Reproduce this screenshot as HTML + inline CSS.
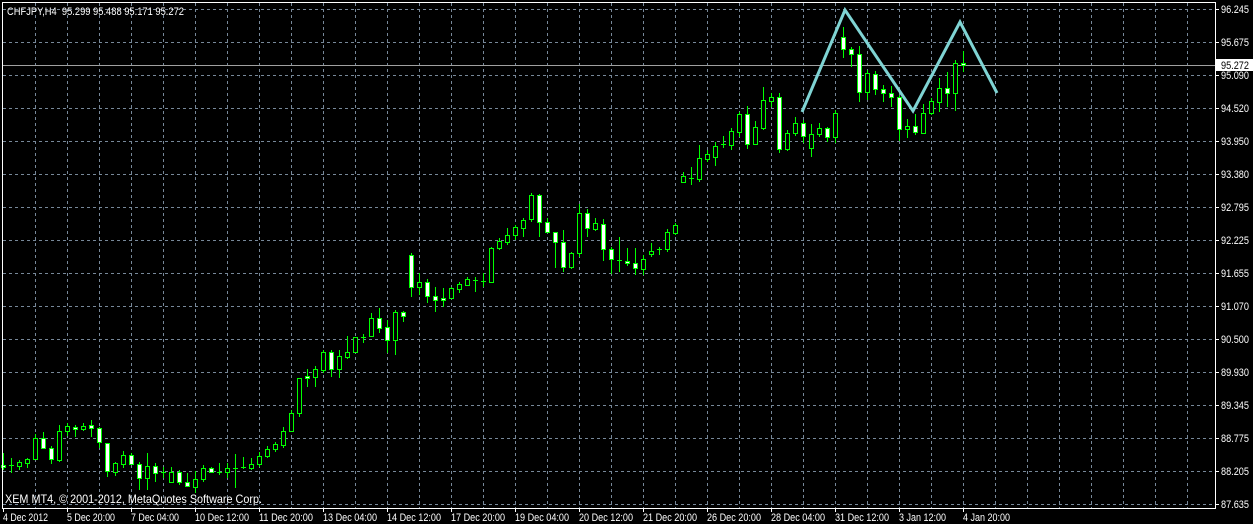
<!DOCTYPE html>
<html><head><meta charset="utf-8"><style>
html,body{margin:0;padding:0;background:#000;width:1253px;height:524px;overflow:hidden}
svg{display:block}
text{font-family:"Liberation Sans",sans-serif;font-size:11px;fill:#fff}
</style></head><body>
<svg width="1253" height="524" viewBox="0 0 1253 524" xmlns="http://www.w3.org/2000/svg">
<rect width="1253" height="524" fill="#000"/>
<g stroke="#778899" stroke-width="1" stroke-dasharray="3,3" shape-rendering="crispEdges">
<path d="M3 9.5H1215M3 42.5H1215M3 75.5H1215M3 108.5H1215M3 141.5H1215M3 174.5H1215M3 207.5H1215M3 240.5H1215M3 273.5H1215M3 306.5H1215M3 339.5H1215M3 372.5H1215M3 405.5H1215M3 438.5H1215M3 471.5H1215M3 504.5H1215"/>
<path d="M35.5 3V508M67.5 3V508M99.5 3V508M131.5 3V508M163.5 3V508M195.5 3V508M227.5 3V508M259.5 3V508M291.5 3V508M323.5 3V508M355.5 3V508M387.5 3V508M419.5 3V508M451.5 3V508M483.5 3V508M515.5 3V508M547.5 3V508M579.5 3V508M611.5 3V508M643.5 3V508M675.5 3V508M707.5 3V508M739.5 3V508M771.5 3V508M803.5 3V508M835.5 3V508M867.5 3V508M899.5 3V508M931.5 3V508M963.5 3V508M995.5 3V508M1027.5 3V508M1059.5 3V508M1091.5 3V508M1123.5 3V508M1155.5 3V508M1187.5 3V508"/>
</g>
<path d="M3 65.5H1215" stroke="#a0a0a0" stroke-width="1" shape-rendering="crispEdges"/>
<g stroke="#00ff00" stroke-width="1" shape-rendering="crispEdges" fill="none">
<path d="M3.5 453V470M11.5 458V473M19.5 460V470M27.5 458V468M35.5 434V460M43.5 432V449M51.5 446V464M59.5 425V462M67.5 423V436M75.5 425V437M83.5 423V431M91.5 420V437M99.5 427V448M107.5 443V477M115.5 462V476M123.5 451V468M131.5 453V465M139.5 462V490M147.5 453V490M155.5 463V482M163.5 467V478M171.5 467V483M179.5 470V485M187.5 473V487M195.5 471V493M203.5 465V482M211.5 467V473M219.5 463V475M227.5 463V478M235.5 454V488M243.5 457V469M251.5 458V470M259.5 452V467M267.5 446V458M275.5 442V452M283.5 427V448M291.5 410V432M299.5 378V417M307.5 369V387M315.5 366V387M323.5 350V373M331.5 350V377M339.5 350V378M347.5 336V359M355.5 337V353M363.5 334V343M371.5 313V337M379.5 308V333M387.5 320V353M395.5 310V355M403.5 311V322M411.5 253V297M419.5 273V295M427.5 279V303M435.5 287V312M443.5 288V307M451.5 287V299M459.5 282V293M467.5 277V286M475.5 277V292M483.5 273V287M491.5 247V282M499.5 238V250M507.5 228V245M515.5 225V240M523.5 218V237M531.5 193V222M539.5 194V237M547.5 218V233M555.5 232V268M563.5 230V272M571.5 252V269M579.5 204V257M587.5 209V237M595.5 218V231M603.5 219V261M611.5 247V274M619.5 237V272M627.5 248V266M635.5 248V275M643.5 255V275M651.5 243V257M659.5 247V255M667.5 229V252M675.5 223V235M683.5 172V183M691.5 167V185M699.5 145V182M707.5 150V162M715.5 142V166M723.5 136V148M731.5 128V150M739.5 112V137M747.5 106V149M755.5 121V145M763.5 87V130M771.5 93V107M779.5 93V153M787.5 130V151M795.5 117V136M803.5 120V143M811.5 124V157M819.5 123V137M827.5 127V142M835.5 110V143M843.5 27V58M851.5 47V67M859.5 46V102M867.5 70V100M875.5 71V95M883.5 85V102M891.5 86V107M899.5 95V141M907.5 119V138M915.5 114V135M923.5 104V133M931.5 98V115M939.5 78V112M947.5 72V107M955.5 60V111M963.5 51V72"/>
<path d="M9 465.5H14M161 472.5H166M217 472.5H222M233 468.5H238M241 467.5H246M361 337.5H366M473 280.5H478M481 281.5H486M617 260.5H622M657 249.5H662M689 178.5H694M721 144.5H726"/>
</g>
<g stroke="#00ff00" stroke-width="1" fill="#000" shape-rendering="crispEdges">
<rect x="17.5" y="462.5" width="4" height="4"/><rect x="25.5" y="459.5" width="4" height="4"/><rect x="33.5" y="438.5" width="4" height="21"/><rect x="57.5" y="431.5" width="4" height="29"/><rect x="65.5" y="426.5" width="4" height="5"/><rect x="81.5" y="426.5" width="4" height="3"/><rect x="113.5" y="463.5" width="4" height="9"/><rect x="121.5" y="455.5" width="4" height="9"/><rect x="145.5" y="466.5" width="4" height="12"/><rect x="169.5" y="472.5" width="4" height="10"/><rect x="193.5" y="479.5" width="4" height="8"/><rect x="201.5" y="468.5" width="4" height="11"/><rect x="225.5" y="468.5" width="4" height="4"/><rect x="249.5" y="464.5" width="4" height="4"/><rect x="257.5" y="456.5" width="4" height="8"/><rect x="265.5" y="449.5" width="4" height="7"/><rect x="273.5" y="444.5" width="4" height="5"/><rect x="281.5" y="431.5" width="4" height="14"/><rect x="289.5" y="413.5" width="4" height="18"/><rect x="297.5" y="378.5" width="4" height="35"/><rect x="313.5" y="369.5" width="4" height="8"/><rect x="321.5" y="352.5" width="4" height="18"/><rect x="337.5" y="356.5" width="4" height="13"/><rect x="345.5" y="352.5" width="4" height="5"/><rect x="353.5" y="337.5" width="4" height="15"/><rect x="369.5" y="318.5" width="4" height="18"/><rect x="393.5" y="312.5" width="4" height="28"/><rect x="417.5" y="282.5" width="4" height="5"/><rect x="449.5" y="288.5" width="4" height="10"/><rect x="457.5" y="284.5" width="4" height="5"/><rect x="465.5" y="279.5" width="4" height="6"/><rect x="489.5" y="248.5" width="4" height="34"/><rect x="497.5" y="241.5" width="4" height="7"/><rect x="505.5" y="235.5" width="4" height="7"/><rect x="513.5" y="227.5" width="4" height="8"/><rect x="521.5" y="220.5" width="4" height="8"/><rect x="529.5" y="195.5" width="4" height="24"/><rect x="569.5" y="253.5" width="4" height="14"/><rect x="577.5" y="213.5" width="4" height="40"/><rect x="593.5" y="223.5" width="4" height="6"/><rect x="641.5" y="259.5" width="4" height="10"/><rect x="649.5" y="251.5" width="4" height="3"/><rect x="665.5" y="232.5" width="4" height="17"/><rect x="673.5" y="225.5" width="4" height="8"/><rect x="681.5" y="176.5" width="4" height="6"/><rect x="697.5" y="158.5" width="4" height="21"/><rect x="705.5" y="154.5" width="4" height="5"/><rect x="713.5" y="146.5" width="4" height="11"/><rect x="729.5" y="131.5" width="4" height="14"/><rect x="737.5" y="114.5" width="4" height="18"/><rect x="753.5" y="127.5" width="4" height="17"/><rect x="761.5" y="100.5" width="4" height="28"/><rect x="769.5" y="97.5" width="4" height="4"/><rect x="785.5" y="133.5" width="4" height="16"/><rect x="793.5" y="123.5" width="4" height="10"/><rect x="809.5" y="134.5" width="4" height="14"/><rect x="817.5" y="128.5" width="4" height="6"/><rect x="833.5" y="113.5" width="4" height="24"/><rect x="865.5" y="73.5" width="4" height="19"/><rect x="905.5" y="126.5" width="4" height="3"/><rect x="921.5" y="113.5" width="4" height="20"/><rect x="929.5" y="101.5" width="4" height="12"/><rect x="937.5" y="88.5" width="4" height="14"/><rect x="953.5" y="63.5" width="4" height="30"/>
</g>
<g stroke="#00ff00" stroke-width="1" fill="#fff" shape-rendering="crispEdges">
<rect x="1.5" y="465.5" width="4" height="2"/><rect x="41.5" y="438.5" width="4" height="10"/><rect x="49.5" y="448.5" width="4" height="11"/><rect x="73.5" y="427.5" width="4" height="2"/><rect x="89.5" y="425.5" width="4" height="3"/><rect x="97.5" y="428.5" width="4" height="14"/><rect x="105.5" y="443.5" width="4" height="28"/><rect x="129.5" y="455.5" width="4" height="9"/><rect x="137.5" y="464.5" width="4" height="14"/><rect x="153.5" y="466.5" width="4" height="7"/><rect x="177.5" y="472.5" width="4" height="10"/><rect x="185.5" y="482.5" width="4" height="4"/><rect x="209.5" y="468.5" width="4" height="4"/><rect x="305.5" y="376.5" width="4" height="2"/><rect x="329.5" y="352.5" width="4" height="17"/><rect x="377.5" y="318.5" width="4" height="10"/><rect x="385.5" y="327.5" width="4" height="13"/><rect x="401.5" y="312.5" width="4" height="4"/><rect x="409.5" y="255.5" width="4" height="32"/><rect x="425.5" y="282.5" width="4" height="14"/><rect x="433.5" y="296.5" width="4" height="4"/><rect x="441.5" y="298.5" width="4" height="2"/><rect x="537.5" y="195.5" width="4" height="27"/><rect x="545.5" y="222.5" width="4" height="10"/><rect x="553.5" y="232.5" width="4" height="10"/><rect x="561.5" y="242.5" width="4" height="25"/><rect x="585.5" y="213.5" width="4" height="15"/><rect x="601.5" y="224.5" width="4" height="25"/><rect x="609.5" y="249.5" width="4" height="10"/><rect x="625.5" y="261.5" width="4" height="2"/><rect x="633.5" y="263.5" width="4" height="5"/><rect x="745.5" y="114.5" width="4" height="30"/><rect x="777.5" y="97.5" width="4" height="52"/><rect x="801.5" y="123.5" width="4" height="13"/><rect x="825.5" y="128.5" width="4" height="9"/><rect x="841.5" y="37.5" width="4" height="12"/><rect x="849.5" y="49.5" width="4" height="5"/><rect x="857.5" y="54.5" width="4" height="38"/><rect x="873.5" y="74.5" width="4" height="15"/><rect x="881.5" y="89.5" width="4" height="4"/><rect x="889.5" y="93.5" width="4" height="4"/><rect x="897.5" y="97.5" width="4" height="32"/><rect x="913.5" y="126.5" width="4" height="6"/><rect x="945.5" y="88.5" width="4" height="5"/><rect x="961.5" y="63.5" width="4" height="2"/>
</g>
<polyline points="802,112 845,10 913,111 960,22 997,93" fill="none" stroke="#7fd4d4" stroke-width="3"/>
<g stroke="#fff" stroke-width="1" fill="none" shape-rendering="crispEdges">
<path d="M2.5 2V508.5H1215.5V2.5H2.5"/>
<path d="M3.5 508V512M67.5 508V512M131.5 508V512M195.5 508V512M259.5 508V512M323.5 508V512M387.5 508V512M451.5 508V512M515.5 508V512M579.5 508V512M643.5 508V512M707.5 508V512M771.5 508V512M835.5 508V512M899.5 508V512M963.5 508V512"/>
<path d="M1215 9.5H1219M1215 42.5H1219M1215 75.5H1219M1215 108.5H1219M1215 141.5H1219M1215 174.5H1219M1215 207.5H1219M1215 240.5H1219M1215 273.5H1219M1215 306.5H1219M1215 339.5H1219M1215 372.5H1219M1215 405.5H1219M1215 438.5H1219M1215 471.5H1219M1215 504.5H1219"/>
</g>
<text x="7" y="15" textLength="177" lengthAdjust="spacingAndGlyphs" xml:space="preserve">CHFJPY,H4  95.299 95.488 95.171 95.272</text>
<text x="5" y="503" style="font-size:12px" textLength="257" lengthAdjust="spacingAndGlyphs">XEM MT4, © 2001-2012, MetaQuotes Software Corp.</text>
<g>
<text x="1221" y="13" textLength="28" lengthAdjust="spacingAndGlyphs">96.245</text><text x="1221" y="46" textLength="28" lengthAdjust="spacingAndGlyphs">95.675</text><text x="1221" y="79" textLength="28" lengthAdjust="spacingAndGlyphs">95.090</text><text x="1221" y="112" textLength="28" lengthAdjust="spacingAndGlyphs">94.520</text><text x="1221" y="145" textLength="28" lengthAdjust="spacingAndGlyphs">93.950</text><text x="1221" y="178" textLength="28" lengthAdjust="spacingAndGlyphs">93.380</text><text x="1221" y="211" textLength="28" lengthAdjust="spacingAndGlyphs">92.795</text><text x="1221" y="244" textLength="28" lengthAdjust="spacingAndGlyphs">92.225</text><text x="1221" y="277" textLength="28" lengthAdjust="spacingAndGlyphs">91.655</text><text x="1221" y="310" textLength="28" lengthAdjust="spacingAndGlyphs">91.070</text><text x="1221" y="343" textLength="28" lengthAdjust="spacingAndGlyphs">90.500</text><text x="1221" y="376" textLength="28" lengthAdjust="spacingAndGlyphs">89.930</text><text x="1221" y="409" textLength="28" lengthAdjust="spacingAndGlyphs">89.345</text><text x="1221" y="442" textLength="28" lengthAdjust="spacingAndGlyphs">88.775</text><text x="1221" y="475" textLength="28" lengthAdjust="spacingAndGlyphs">88.205</text><text x="1221" y="508" textLength="28" lengthAdjust="spacingAndGlyphs">87.635</text>
</g>
<rect x="1216" y="59" width="37" height="12" fill="#fff"/>
<text x="1221" y="69" style="fill:#000" textLength="28" lengthAdjust="spacingAndGlyphs">95.272</text>
<g>
<text x="3" y="521" textLength="45" lengthAdjust="spacingAndGlyphs">4 Dec 2012</text><text x="67" y="521" textLength="48" lengthAdjust="spacingAndGlyphs">5 Dec 20:00</text><text x="131" y="521" textLength="48" lengthAdjust="spacingAndGlyphs">7 Dec 04:00</text><text x="195" y="521" textLength="54" lengthAdjust="spacingAndGlyphs">10 Dec 12:00</text><text x="259" y="521" textLength="54" lengthAdjust="spacingAndGlyphs">11 Dec 20:00</text><text x="323" y="521" textLength="54" lengthAdjust="spacingAndGlyphs">13 Dec 04:00</text><text x="387" y="521" textLength="54" lengthAdjust="spacingAndGlyphs">14 Dec 12:00</text><text x="451" y="521" textLength="54" lengthAdjust="spacingAndGlyphs">17 Dec 20:00</text><text x="515" y="521" textLength="54" lengthAdjust="spacingAndGlyphs">19 Dec 04:00</text><text x="579" y="521" textLength="54" lengthAdjust="spacingAndGlyphs">20 Dec 12:00</text><text x="643" y="521" textLength="54" lengthAdjust="spacingAndGlyphs">21 Dec 20:00</text><text x="707" y="521" textLength="54" lengthAdjust="spacingAndGlyphs">26 Dec 20:00</text><text x="771" y="521" textLength="54" lengthAdjust="spacingAndGlyphs">28 Dec 04:00</text><text x="835" y="521" textLength="54" lengthAdjust="spacingAndGlyphs">31 Dec 12:00</text><text x="899" y="521" textLength="47" lengthAdjust="spacingAndGlyphs">3 Jan 12:00</text><text x="963" y="521" textLength="47" lengthAdjust="spacingAndGlyphs">4 Jan 20:00</text>
</g>
</svg>
</body></html>
